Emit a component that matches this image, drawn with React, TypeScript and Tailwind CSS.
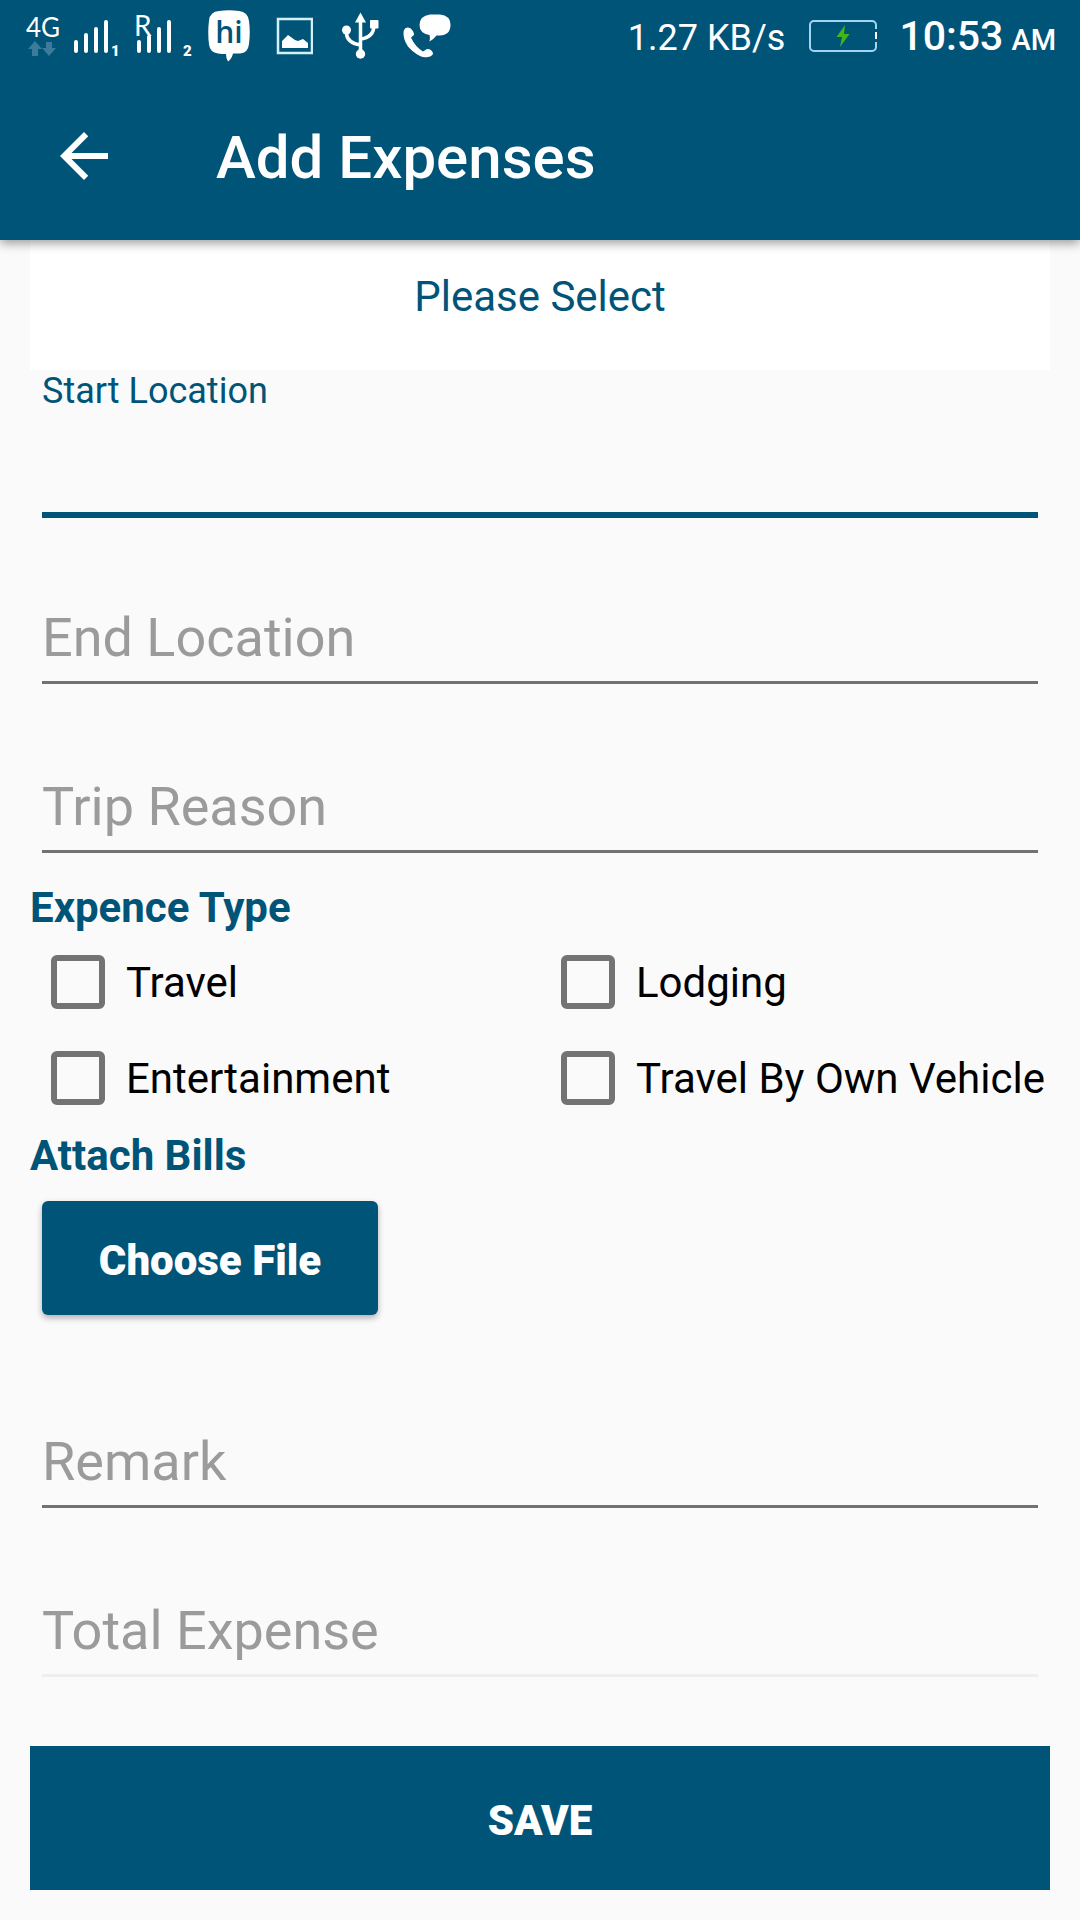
import { useRef, useState } from "react";

const EXPENSE_TYPES = ["Travel", "Lodging", "Entertainment", "Travel By Own Vehicle"];

function StatusBar() {
  return (
    <div className="flex h-[72px] items-center justify-between pl-[26px] pr-6 text-white">
      <div className="flex items-center gap-[26px]">
        <div className="flex items-center gap-[14px]">
          {/* 4G + data arrows */}
          <svg width="32" height="72" viewBox="26 0 32 72" fill="currentColor" className="overflow-visible">
            <text x="26" y="37" fontSize="26" fontFamily="Lato">4G</text>
            <g className="fill-[#3a7c9a]">
              <path d="M35 41l7 8h-4v7h-6v-7h-4z" />
              <path d="M49 56l7-8h-4v-6h-6v6h-4z" />
            </g>
          </svg>

          {/* SIM 1 */}
          <svg width="48" height="72" viewBox="72 0 48 72" className="overflow-visible">
            <path
              d="M76 42v9M86 35v16M96 29v22M106 22v29"
              stroke="currentColor"
              strokeWidth="4"
              strokeLinecap="round"
            />
            <text x="111" y="56" fontSize="15" fontWeight="900" fontFamily="Roboto" fill="currentColor">1</text>
          </svg>

          {/* SIM 2, roaming */}
          <svg width="60" height="72" viewBox="134 0 60 72" className="overflow-visible">
            <text x="134" y="36" fontSize="28" fontFamily="Lato" fill="currentColor">R</text>
            <path
              d="M139 42v9M149 37v14M159 29v22M169 22v29"
              stroke="currentColor"
              strokeWidth="4"
              strokeLinecap="round"
            />
            <text x="183" y="56" fontSize="15" fontWeight="900" fontFamily="Roboto" fill="currentColor">2</text>
          </svg>

          {/* chat app */}
          <svg width="42" height="72" viewBox="208 0 42 72">
            <path
              d="M219 11q10-1.500 20 0q9 1 10 10q1.500 11 0 23q-1 9-9 9.500h-7q-1 5-5 8q-2-3-2-7.500q-4 0-8-.500q-8-1-9-9q-1.500-12 0-24q1-9 10-9.500z"
              fill="currentColor"
            />
            <text
              x="229"
              y="43"
              fontSize="30"
              fontWeight="600"
              fontFamily="Open Sans"
              textAnchor="middle"
              className="fill-[#005478]"
            >
              hi
            </text>
          </svg>
        </div>

        <svg width="37" height="72" viewBox="276 0 37 72">
          <rect x="278" y="19" width="34" height="34" fill="none" stroke="#d5f1f8" strokeWidth="2.500" />
          <path d="M282 48v-7l6-6 7 5 3 1 5-2 5 4v5z" fill="currentColor" />
        </svg>

        <svg width="38" height="72" viewBox="339 0 38 72" className="overflow-visible">
          <path
            d="M360.500 18v35M346.500 31v3q1 9 14 11M374 25q0 12-13 14"
            fill="none"
            stroke="currentColor"
            strokeWidth="3.500"
          />
          <path d="M360.500 12.500l5.500 10h-11z" fill="currentColor" />
          <circle cx="346.500" cy="30" r="4.500" fill="currentColor" />
          <circle cx="360.500" cy="54" r="4.700" fill="currentColor" />
          <rect x="370" y="20" width="8.500" height="8.500" rx="1" fill="currentColor" />
        </svg>

        <svg width="48" height="72" viewBox="403 0 48 72" fill="currentColor">
          <path d="M430 14.500h10q10.500 1 10.500 10.500q0 10-11 10.500h-3q-3 4-7 6q1-3 0-6.500q-10-1.500-10-10q0-9 10.500-10.500z" />
          <path d="M404 30q2-3.500 6-2q4 3 4 7l-3 2.500q4 9 12 14l4-2.500q4-.500 6 4q0 3-5 4q-4 1-8-1q-17-9-16.500-24z" />
        </svg>
      </div>

      <div className="flex items-center">
        <span className="pt-1 text-[36px] leading-[42px]">1.27 KB/s</span>
        <svg width="68" height="72" viewBox="808 0 68 72" className="ml-6 mr-[22px]">
          <rect x="809" y="21" width="66" height="30" rx="4" fill="none" stroke="#a3d5f5" strokeWidth="2" />
          <path d="M875 29v13" stroke="#005478" strokeWidth="3" />
          <path d="M875 32v7" stroke="#fff" strokeWidth="2" />
          <path d="M844 25l-8.500 12h5.500l-2 10 9.500-13h-5.500z" fill="#41b619" />
        </svg>
        <div className="flex items-baseline gap-2 pt-1 font-medium leading-[50px]">
          <span className="text-[41px]">10:53</span>
          <span className="text-[29px]">AM</span>
        </div>
      </div>
    </div>
  );
}

type FieldProps = {
  id: string;
  label: string;
  active?: boolean;
  disabled?: boolean;
};

function Field({ id, label, active, disabled }: FieldProps) {
  const [value, setValue] = useState("");
  const underline = active
    ? "border-[#005478] shadow-[0_3px_0_#005478]"
    : disabled
      ? "border-[#eeeeee]"
      : "border-[#727272]";

  return (
    <div className={active ? "mx-3" : "mx-3 pt-[66px]"}>
      {active && (
        <label htmlFor={id} className="block text-[36px] leading-[42px] text-[#005478]">
          {label}
        </label>
      )}
      <input
        id={id}
        type="text"
        aria-label={label}
        placeholder={active ? undefined : label}
        disabled={disabled}
        value={value}
        onChange={(e) => setValue(e.target.value)}
        className={`block h-[103px] w-full border-b-[3px] bg-transparent pt-6 pb-3 text-[54px] text-black outline-none placeholder:text-[#9b9b9b] ${underline}`}
      />
    </div>
  );
}

export default function App() {
  const [checked, setChecked] = useState<string[]>([]);
  const fileRef = useRef<HTMLInputElement>(null);

  const toggle = (type: string) =>
    setChecked((prev) =>
      prev.includes(type) ? prev.filter((t) => t !== type) : [...prev, type]
    );

  return (
    <div className="min-h-screen bg-[#fafafa] font-['Roboto',sans-serif]">
      <header className="relative bg-[#005478] text-white shadow-[0_3px_10px_rgba(0,0,0,0.4)]">
        <StatusBar />
        <div className="flex h-[168px] items-center px-12">
          <button type="button" aria-label="Back">
            <svg width="72" height="72" viewBox="0 0 24 24" fill="currentColor">
              <path d="M20 11H7.830l5.590-5.590L12 4l-8 8 8 8 1.410-1.410L7.830 13H20v-2z" />
            </svg>
          </button>
          <h1 className="ml-24 pt-1 text-[60px] font-medium leading-[72px]">Add Expenses</h1>
        </div>
      </header>

      <form className="px-[30px] pb-[30px]" onSubmit={(e) => e.preventDefault()}>
        <select
          aria-label="Please Select"
          className="block h-[130px] w-full appearance-none bg-white pb-[18px] text-center text-[42px] text-[#005478] outline-none [text-align-last:center]"
        >
          <option>Please Select</option>
        </select>

        <Field id="start" label="Start Location" active />
        <Field id="end" label="End Location" />
        <Field id="reason" label="Trip Reason" />

        <h2 className="mt-[29px] text-[42px] font-bold leading-[52px] text-[#005478]">Expence Type</h2>
        <div className="grid grid-cols-2">
          {EXPENSE_TYPES.map((type) => (
            <label key={type} className="flex h-24 items-center whitespace-nowrap pl-[21px] text-[42px] text-black">
              <input
                type="checkbox"
                checked={checked.includes(type)}
                onChange={() => toggle(type)}
                className="mr-[21px] size-[54px] shrink-0 appearance-none rounded-[6px] border-[6px] border-[#737373] checked:bg-[#005478]"
              />
              {type}
            </label>
          ))}
        </div>

        <h2 className="mt-1 text-[42px] font-bold leading-[52px] text-[#005478]">Attach Bills</h2>
        <input ref={fileRef} type="file" aria-label="Attach Bills" className="hidden" />
        <button
          type="button"
          onClick={() => fileRef.current?.click()}
          className="mx-3 mt-[19px] mb-6 block h-[114px] w-[336px] rounded-[6px] bg-[#005478] pt-1 text-[42px] font-black text-white shadow-[0_3px_6px_rgba(0,0,0,0.3)]"
        >
          Choose File
        </button>

        <Field id="remark" label="Remark" />
        <Field id="total" label="Total Expense" disabled />

        <button
          type="submit"
          className="mt-[69px] block h-36 w-full bg-[#005478] pt-1 text-[42px] font-black text-white"
        >
          SAVE
        </button>
      </form>
    </div>
  );
}
